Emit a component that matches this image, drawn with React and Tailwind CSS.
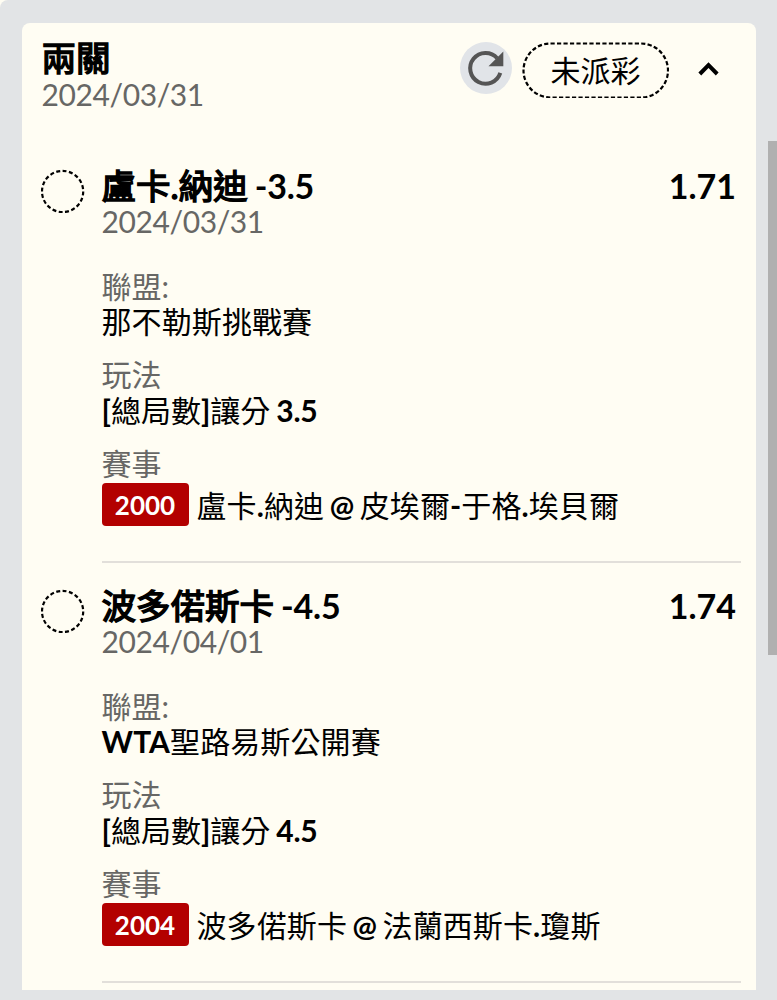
const bets = [
    {
        id: 2000,
        name: "盧卡.納迪",
        line: "-3.5",
        odds: "1.71",
        date: "2024/03/31",
        league: "那不勒斯挑戰賽",
        handicap: "3.5",
        home: "盧卡.納迪",
        away: "皮埃爾-于格.埃貝爾",
    },
    {
        id: 2004,
        name: "波多偌斯卡",
        line: "-4.5",
        odds: "1.74",
        date: "2024/04/01",
        league: "WTA聖路易斯公開賽",
        handicap: "4.5",
        home: "波多偌斯卡",
        away: "法蘭西斯卡.瓊斯",
    },
];

// latin letters and signs are heavier than the chinese ones
function Mixed({ text }) {
    return text.split(/([A-Z@.\-[\]]+)/).map((part, i) => (
        i % 2 ? <span key={i} className="font-bold">{part}</span> : part
    ));
}

function DashedCircle() {
    return (
        <svg className="mt-[1px] h-11 w-11 shrink-0" viewBox="0 0 44 44" fill="none">
            <circle cx="21.6" cy="22.5" r="20.6" stroke="#000" strokeWidth="2.2" pathLength="120" strokeDasharray="3.7 2.3" />
        </svg>
    );
}

function RefreshButton() {
    return (
        <button className="flex h-[52px] w-[52px] items-center justify-center rounded-full bg-[#e1e4e8]">
            <svg className="h-[52px] w-[52px]" viewBox="0 0 52 52" fill="none">
                <path d="M40.3 30.9A15.4 15.4 0 1 1 37.2 16.2" stroke="#555" strokeWidth="4" />
                <path d="M43.3 9.6v14.6H28.5z" fill="#555" />
            </svg>
        </button>
    );
}

function StatusPill({ children }) {
    return (
        <span className="relative ml-[10px] flex h-14 w-[147px] items-center justify-center">
            <svg className="absolute inset-0 h-full w-full" viewBox="0 0 147 56" fill="none">
                <rect x="1.5" y="1.5" width="144.5" height="54" rx="27" stroke="#000" strokeWidth="2.2" pathLength="324" strokeDasharray="3.9 2.1" />
            </svg>
            {children}
        </span>
    );
}

function Field({ label, children }) {
    return (
        <div className="leading-[35px]">
            <p className="text-[#676765]">{label}</p>
            {children}
        </div>
    );
}

function Bet({ bet }) {
    return (
        <div className="flex gap-[16.5px] pb-[25px]">
            <DashedCircle />
            <div className="flex h-[395px] w-[639px] flex-col border-b-2 border-[#e2dfda]">
                <div className="flex justify-between pr-[4.5px] text-[34.5px] leading-[35px] font-bold">
                    <h3>
                        <span className="font-normal [-webkit-text-stroke:1.5px_#000]">{bet.name}</span>
                        <span className="ml-[7px] text-[34px] tracking-[-0.2px]">{bet.line}</span>
                    </h3>
                    <span className="text-[34px]">{bet.odds}</span>
                </div>
                <p className="pt-[1px] leading-[35px] tracking-[-0.4px] text-[#676765]">{bet.date}</p>
                <div className="mt-[30px] flex flex-col gap-[18px]">
                    <Field label="聯盟:">
                        <p className="tracking-[0.1px]"><Mixed text={bet.league} /></p>
                    </Field>
                    <Field label="玩法">
                        <p className="pt-[1px]"><Mixed text="[總局數]讓分" /><span className="ml-[6px] font-bold tracking-[-0.3px]">{bet.handicap}</span></p>
                    </Field>
                    <Field label="賽事">
                        <div className="mt-[2px] flex items-center gap-[8px]">
                            <span className="h-[43px] w-[87px] rounded bg-[#b30000] text-center text-[26px] leading-[44px] font-bold text-white">{bet.id}</span>
                            <span className="pt-[1px] tracking-[0.1px]"><Mixed text={bet.home} /><span className="mx-[5.5px] text-[29px] font-bold">@</span><Mixed text={bet.away} /></span>
                        </div>
                    </Field>
                </div>
            </div>
        </div>
    );
}

export default function App() {
    return (
        <div className="h-[1000px] overflow-hidden bg-[#fffdf3]">
            <div className="flex h-full justify-between rounded-tl-lg bg-[#e2e4e6] pl-[22px] font-[Lato,'Noto_Sans_CJK_TC',sans-serif] text-[30px] text-black">
                <div className="mt-[23px] h-[967px] w-[734px] overflow-hidden rounded-t-lg bg-[#fffdf3] pl-[19px]">
                    <header className="flex h-[145px] items-start justify-between pt-[19px]">
                        <div className="-mt-[2px] pl-[0.5px] leading-[35px]">
                            <h2 className="text-[34.5px] [-webkit-text-stroke:1.5px_#000]">兩關</h2>
                            <p className="pt-[2px] tracking-[-0.4px] text-[#676765]">2024/03/31</p>
                        </div>
                        <div className="flex items-start pr-9">
                            <RefreshButton />
                            <StatusPill>未派彩</StatusPill>
                            <svg className="mt-5 ml-[29px] h-[15px] w-[22px]" viewBox="0 0 22 15" fill="none" stroke="#000" strokeWidth="4">
                                <path d="M1.8 12L10.5 3.2L19.2 12" />
                            </svg>
                        </div>
                    </header>
                    {bets.map((bet) => <Bet key={bet.id} bet={bet} />)}
                </div>
                <div className="mt-[141px] h-[514px] w-[9px] bg-[#b0b0b0]"></div>
            </div>
        </div>
    );
}
